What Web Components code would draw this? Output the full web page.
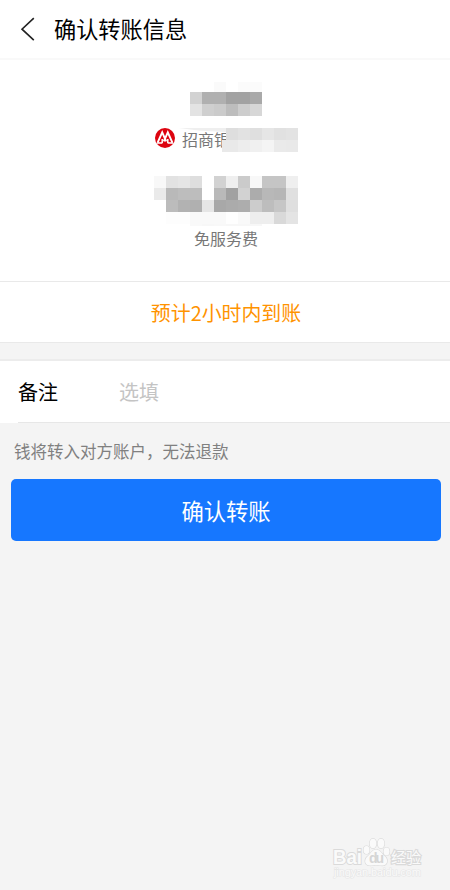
<!DOCTYPE html>
<html lang="zh-CN">
<head>
<meta charset="utf-8">
<meta name="viewport" content="width=device-width, initial-scale=1">
<title>确认转账信息</title>
<style>
    body {
        margin: 0;
        background: #f4f4f4;
        font-family: "Noto Sans CJK SC", sans-serif;
    }
</style>
</head>
<body>
<transfer-page>
    <nav-header slot="header">确认转账信息</nav-header>

    <payee-summary>
        <pixel-mosaic slot="name" cols="6" first="10"
            cells="ff ff fa ff fb fb  d2 b0 b0 a2 a2 a9  e3 cf cb bd cd d7"></pixel-mosaic>
        <bank-label slot="bank">招商银
            <pixel-mosaic slot="mask" cols="6"
                cells="de e2 df e6 e1 e3  e9 ed f0 f4 ea e9"></pixel-mosaic>
        </bank-label>
        <pixel-mosaic slot="amount" cols="12" last="2"
            cells="f8 e2 e5 de ff d2 ef cb f8 c5 c5 ef
                   ea b9 bd bd ff b9 a1 d2 ac b8 b6 e0
                   ff bc b2 b0 e6 a8 ab ad cc bd c6 df
                   ff fd fd f9 f9 f9 fe f9 ee ee d9 e4
                   ff ff ff f9 f7 f8 f7 f7 f7 ff ff ff"></pixel-mosaic>
        <span slot="fee">免服务费</span>
    </payee-summary>

    <arrival-notice>预计2小时内到账</arrival-notice>
    <remark-field label="备注">选填</remark-field>
    <hint-text>钱将转入对方账户，无法退款</hint-text>
    <confirm-button>确认转账</confirm-button>
    <site-watermark slot="footer"></site-watermark>
</transfer-page>

<script>
function attach(el, html) {
    const template = document.createElement("template");
    template.innerHTML = html;
    el.attachShadow({mode: "open"}).appendChild(template.content.cloneNode(true));
}

class TransferPage extends HTMLElement {
    constructor() {
        super();
        attach(this, `
            <style>
                :host {
                    display: flex;
                    flex-direction: column;
                    height: 890px;
                    overflow: hidden;
                }
                main {
                    flex: 1;
                }
            </style>
            <slot name="header"></slot>
            <main><slot></slot></main>
            <slot name="footer"></slot>
        `);
    }
}

class NavHeader extends HTMLElement {
    constructor() {
        super();
        attach(this, `
            <style>
                :host {
                    display: flex;
                    align-items: center;
                    box-sizing: border-box;
                    height: 60px;
                    padding: 0 20px;
                    gap: 18px;
                    background: #fff;
                    border-bottom: 2px solid #f9f9f9;
                    font-size: 22.2px;
                    line-height: 30px;
                    color: #000;
                }
                svg {
                    width: 16px;
                    height: 24px;
                }
                span {
                    padding-bottom: 2px;
                }
            </style>
            <svg viewBox="0 0 16 24" fill="none" stroke="#222" stroke-width="1.6">
                <path d="M13.8 1.2 2 12.2 13.8 23.2"/>
            </svg>
            <span><slot></slot></span>
        `);
    }
}

class PayeeSummary extends HTMLElement {
    constructor() {
        super();
        attach(this, `
            <style>
                :host {
                    display: flex;
                    flex-direction: column;
                    align-items: center;
                    box-sizing: border-box;
                    height: 222px;
                    padding: 22px 0 0 2px;
                    background: #fff;
                    border-bottom: 1px solid #e9e9e9;
                    font-size: 16px;
                    line-height: 24px;
                    color: #777;
                }
                .bank {
                    margin: 11px 0 24px;
                }
            </style>
            <slot name="name"></slot>
            <div class="bank"><slot name="bank"></slot></div>
            <slot name="amount"></slot>
            <div><slot name="fee"></slot></div>
        `);
    }
}

class BankLabel extends HTMLElement {
    constructor() {
        super();
        attach(this, `
            <style>
                :host {
                    display: flex;
                    position: relative;
                    align-items: flex-start;
                    width: 144px;
                    height: 25px;
                    white-space: nowrap;
                }
                svg {
                    flex: none;
                    width: 20px;
                    height: 20px;
                    margin: 1px 7px 0 1px;
                }
                /* the mask lies over the end of the bank name */
                .mask {
                    position: absolute;
                    right: 0;
                    top: 1px;
                    padding-left: 4px;
                    background: linear-gradient(to right, #e9e9e9, #e9e9e9) left bottom / 4px 12px no-repeat;
                }
                .smear {
                    position: absolute;
                    left: 25px;
                    top: 1px;
                    width: 47px;
                    height: 4px;
                    background: #efefef;
                    clip-path: polygon(0 0, 100% 0, 100% 100%, 45% 70%);
                }
            </style>
            <svg viewBox="0 0 20 20">
                <circle cx="10" cy="10" r="10" fill="#dd0410"/>
                <g fill="none" stroke="#fff">
                    <path stroke-width="1.9" d="M2.6 14.6 7.2 4.4 11.2 13.4M8.8 13.4 12.8 4.4 17.4 14.6"/>
                    <path stroke-width="1.5" d="M1.9 14.9H7.4M12.6 14.9H18.1M7.200 11V15M12.800 11V15"/>
                </g>
            </svg>
            <span><slot></slot></span>
            <div class="smear"></div>
            <div class="mask"><slot name="mask"></slot></div>
        `);
    }
}

// Grid of grey 12px cells, each given as one hex byte in "cells".
// "first" and "last" set the height of a clipped first or last row.
class PixelMosaic extends HTMLElement {
    constructor() {
        super();
        attach(this, `
            <style>
                :host {
                    display: block;
                }
                .grid {
                    display: grid;
                    grid-auto-rows: 12px;
                }
            </style>
            <div class="grid"></div>
        `);
    }

    connectedCallback() {
        const grid = this.shadowRoot.querySelector(".grid");
        const cols = Number(this.getAttribute("cols"));
        const cells = this.getAttribute("cells").trim().split(/\s+/);
        const rows = new Array(cells.length / cols).fill(12);

        if (this.hasAttribute("first")) rows[0] = Number(this.getAttribute("first"));
        if (this.hasAttribute("last")) rows[rows.length - 1] = Number(this.getAttribute("last"));

        grid.style.gridTemplateColumns = `repeat(${cols}, 12px)`;
        grid.style.gridTemplateRows = rows.map((h) => `${h}px`).join(" ");
        grid.replaceChildren(...cells.map((c) => {
            const cell = document.createElement("i");
            cell.style.background = `#${c}${c}${c}`;
            return cell;
        }));
    }
}

class ArrivalNotice extends HTMLElement {
    constructor() {
        super();
        attach(this, `
            <style>
                :host {
                    display: flex;
                    align-items: center;
                    justify-content: center;
                    height: 60px;
                    padding-left: 2px;
                    background: #fff;
                    border-bottom: 1px solid #e9e9e9;
                    font-size: 19.9px;
                    color: #ff9300;
                }
            </style>
            <slot></slot>
        `);
    }
}

class RemarkField extends HTMLElement {
    constructor() {
        super();
        attach(this, `
            <style>
                :host {
                    display: block;
                    margin-top: 16px;
                    padding-left: 18px;
                    background: #fff;
                    border-top: 2px solid #ececec;
                    font-size: 20px;
                }
                .row {
                    display: grid;
                    grid-template-columns: 101px 1fr;
                    align-items: center;
                    height: 61px;
                    border-bottom: 1px solid #e7e7e7;
                }
                .label {
                    color: #000;
                }
                .value {
                    color: #c4c4c4;
                }
            </style>
            <div class="row">
                <span class="label"></span>
                <span class="value"><slot></slot></span>
            </div>
        `);
    }

    connectedCallback() {
        this.shadowRoot.querySelector(".label").textContent = this.getAttribute("label") ?? "";
    }
}

class HintText extends HTMLElement {
    constructor() {
        super();
        attach(this, `
            <style>
                :host {
                    display: block;
                    padding: 16px 14px 15px;
                    font-size: 16.5px;
                    line-height: 25px;
                    color: #808080;
                }
            </style>
            <slot></slot>
        `);
    }
}

class ConfirmButton extends HTMLElement {
    constructor() {
        super();
        attach(this, `
            <style>
                :host {
                    display: block;
                    padding: 0 9px 0 11px;
                }
                button {
                    display: block;
                    width: 100%;
                    height: 62px;
                    padding: 0;
                    border: none;
                    border-radius: 5px;
                    background: #1677ff;
                    color: #fff;
                    font: inherit;
                    font-size: 22.3px;
                }
            </style>
            <button><slot></slot></button>
        `);
    }
}

class SiteWatermark extends HTMLElement {
    constructor() {
        super();
        attach(this, `
            <style>
                :host {
                    display: block;
                    align-self: flex-end;
                    width: 100px;
                    height: 56px;
                    margin-right: 20px;
                }
                svg {
                    display: block;
                }
            </style>
            <svg width="100" height="56" viewBox="0 0 100 56" fill="#fafafa" stroke="#dadada" stroke-width="1.2"
                paint-order="stroke" font-family="Liberation Sans, sans-serif">
                <text x="3" y="29.5" font-size="20" font-weight="700" stroke-width="2"
                    textLength="29" lengthAdjust="spacingAndGlyphs">Bai</text>
                <ellipse cx="36.5" cy="16" rx="3" ry="4"/>
                <ellipse cx="43" cy="9.5" rx="3.4" ry="4.8"/>
                <ellipse cx="51" cy="9.5" rx="3.4" ry="4.8"/>
                <ellipse cx="56.5" cy="17.5" rx="3" ry="4"/>
                <path d="M46 15.5c-4 0-5 4-8 6.5-4 3-4 9 1.5 9.5 2.500.200 4-.500 6.500-.500s4.500.700 7 .500c5-.500 5.500-6.500 1.500-9.500-3-2.500-4.500-6.500-8.500-6.500z"/>
                <text x="39" y="29" font-size="14" font-weight="700" fill="#d6d6d6" stroke="none" textLength="15">du</text>
                <text x="61" y="28.5" font-size="15" stroke-width="2.2"
                    font-family="Noto Sans CJK SC, sans-serif">经验</text>
                <text x="4" y="42" font-size="11" stroke="#e6e6e6" textLength="87">jingyan.baidu.com</text>
            </svg>
        `);
    }
}

customElements.define("transfer-page", TransferPage);
customElements.define("nav-header", NavHeader);
customElements.define("payee-summary", PayeeSummary);
customElements.define("bank-label", BankLabel);
customElements.define("pixel-mosaic", PixelMosaic);
customElements.define("arrival-notice", ArrivalNotice);
customElements.define("remark-field", RemarkField);
customElements.define("hint-text", HintText);
customElements.define("confirm-button", ConfirmButton);
customElements.define("site-watermark", SiteWatermark);
</script>
</body>
</html>
